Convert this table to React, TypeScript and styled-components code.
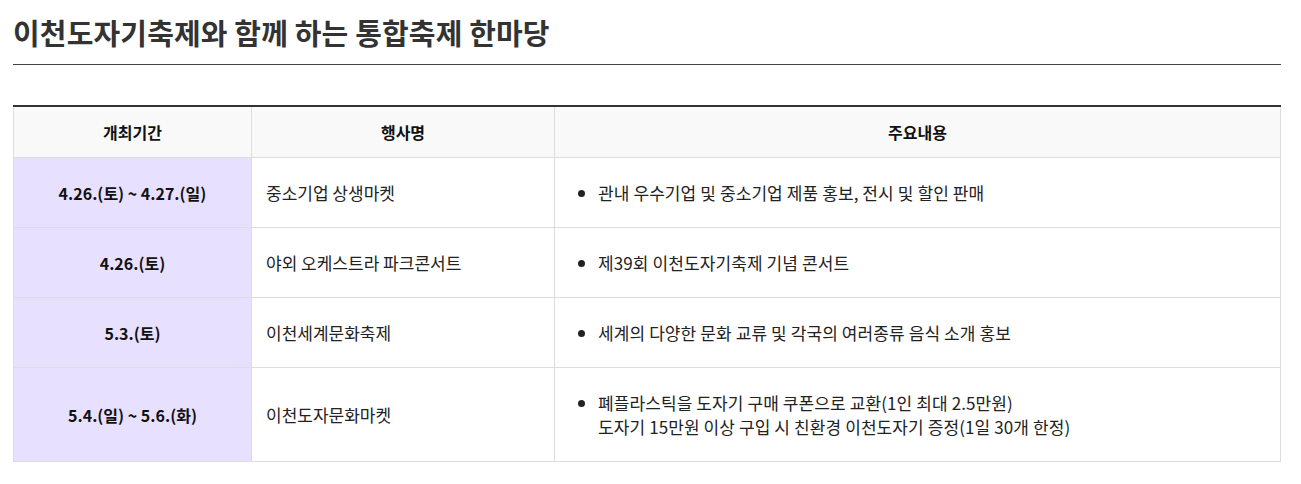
import styled, { createGlobalStyle } from "styled-components";

const GlobalStyle = createGlobalStyle`
  body {
    margin: 0;
    background: #fff;
    font-family: "Noto Sans CJK KR", "Noto Sans", sans-serif;
    color: #222;
  }
`;

const Page = styled.div`
  width: 1268px;
  padding: 0 20px 0 13px;
`;

const Title = styled.h2`
  margin: 0;
  padding-top: 13px;
  height: 65px;
  box-sizing: border-box;
  border-bottom: 1px solid #444;
  font-size: 29px;
  font-weight: 700;
  letter-spacing: 0.15px;
  line-height: 38px;
  color: #333;
`;

const Table = styled.table`
  margin-top: 40px;
  width: 100%;
  border-collapse: collapse;
  table-layout: fixed;
  border-top: 2px solid #333;
`;

const HeadCell = styled.th`
  height: 50px;
  padding: 0;
  background: #f9f9f9;
  border: 1px solid #ddd;
  border-top: none;
  font-size: 16px;
  font-weight: 700;
  color: #111;
`;

const Row = styled.tr<{ $tall?: boolean }>`
  height: ${(p) => (p.$tall ? "94px" : "70px")};
`;

const DateCell = styled.td`
  background: #e8e0ff;
  border: 1px solid #ddd;
  text-align: center;
  font-size: 16px;
  font-weight: 700;
  color: #111;
`;

const NameCell = styled.td`
  border: 1px solid #ddd;
  padding: 0 14px;
  font-size: 17px;
  color: #222;
`;

const InfoCell = styled.td`
  border: 1px solid #ddd;
  padding: 0 20px 0 43px;
  font-size: 17px;
  letter-spacing: 0.1px;
  color: #222;
`;

const List = styled.ul`
  margin: 0;
  padding: 0;
  list-style: disc;
  line-height: 24px;
  white-space: pre-line;
`;

const rows = [
  { date: "4.26.(토) ~ 4.27.(일)", name: "중소기업 상생마켓", info: ["관내 우수기업 및 중소기업 제품 홍보, 전시 및 할인 판매"] },
  { date: "4.26.(토)", name: "야외 오케스트라 파크콘서트", info: ["제39회 이천도자기축제 기념 콘서트"] },
  { date: "5.3.(토)", name: "이천세계문화축제", info: ["세계의 다양한 문화 교류 및 각국의 여러종류 음식 소개 홍보"] },
  {
    date: "5.4.(일) ~ 5.6.(화)",
    name: "이천도자문화마켓",
    info: ["폐플라스틱을 도자기 구매 쿠폰으로 교환(1인 최대 2.5만원)", "도자기 15만원 이상 구입 시 친환경 이천도자기 증정(1일 30개 한정)"],
  },
];

const App = () => {
  return (
    <Page>
      <GlobalStyle />
      <Title>이천도자기축제와 함께 하는 통합축제 한마당</Title>
      <Table>
        <colgroup>
          <col style={{ width: 238 }} />
          <col style={{ width: 303 }} />
          <col />
        </colgroup>
        <thead>
          <tr>
            <HeadCell>개최기간</HeadCell>
            <HeadCell>행사명</HeadCell>
            <HeadCell>주요내용</HeadCell>
          </tr>
        </thead>
        <tbody>
          {rows.map((r) => (
            <Row key={r.date} $tall={r.info.length > 1}>
              <DateCell>{r.date}</DateCell>
              <NameCell>{r.name}</NameCell>
              <InfoCell>
                <List>
                  <li>{r.info.join("\n")}</li>
                </List>
              </InfoCell>
            </Row>
          ))}
        </tbody>
      </Table>
    </Page>
  );
};

export default App;
